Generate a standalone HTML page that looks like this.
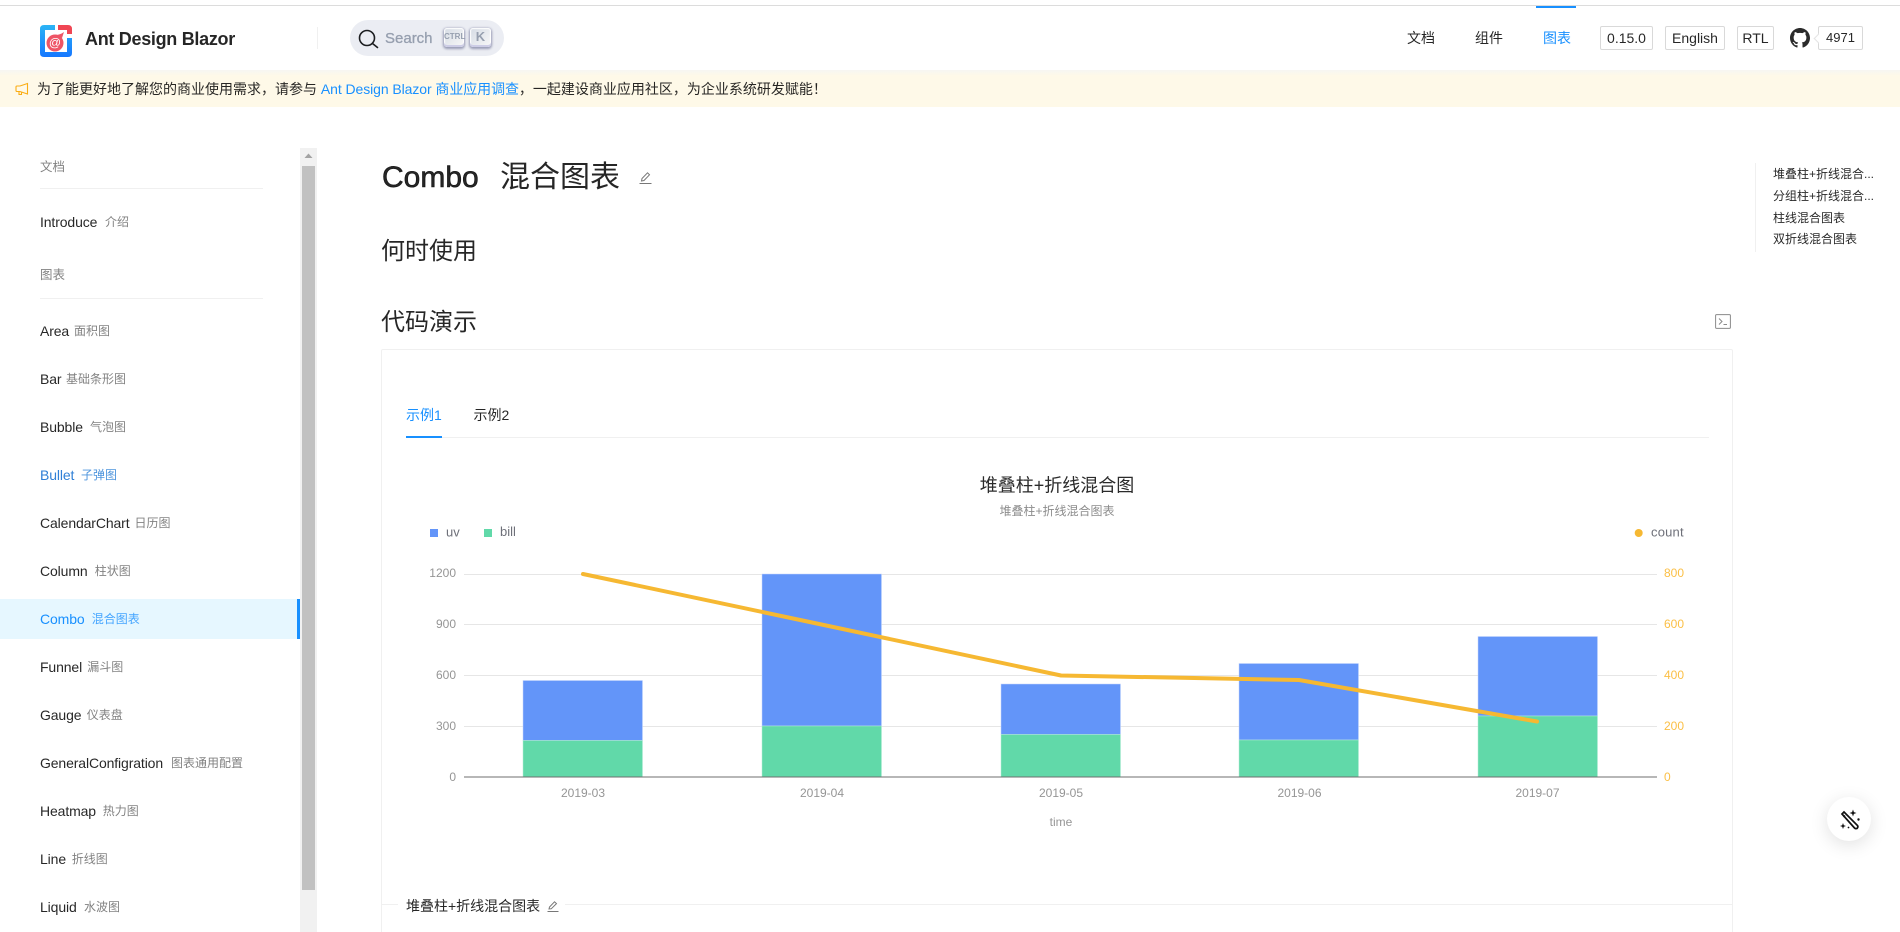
<!DOCTYPE html>
<html lang="zh"><head><meta charset="utf-8"><title>Combo 混合图表</title>
<style>
html,body{margin:0;padding:0;width:1900px;height:932px;overflow:hidden;background:#fff}
body{position:relative;font-family:"Liberation Sans","Noto Sans CJK SC",sans-serif;font-size:14px;color:rgba(0,0,0,.85)}
.a{position:absolute;white-space:nowrap}
.nav{line-height:20px;height:20px;letter-spacing:-.12px}
.sub{font-size:12px;color:rgba(0,0,0,.5);letter-spacing:0}
.btn{position:absolute;top:26px;height:22px;border:1px solid #d9d9d9;border-radius:2px;line-height:22px;text-align:center;font-size:14px;color:rgba(0,0,0,.85)}
.key{position:absolute;top:28px;height:19px;border-radius:3px;background:linear-gradient(-225deg,#d5dbe4,#f8f8f8);box-shadow:inset 0 -2px 0 0 #cdcde6,inset 0 0 1px 1px #fff,0 1px 2px 1px rgba(30,35,90,.4);color:#969faf;text-align:center}
h1,h2{margin:0;font-weight:400}
.anc{position:absolute;left:1773px;font-size:12px;line-height:20px;white-space:nowrap}
</style></head><body>
<div class="a" style="left:0;top:5px;width:1900px;height:1px;background:#dcdcdc"></div>
<div class="a" style="left:1536px;top:6px;width:40px;height:2px;background:#1890ff"></div>

<svg class="a" style="left:40px;top:25px" width="32" height="32" viewBox="0 0 32 32" font-family="'Liberation Sans',sans-serif">
<defs><linearGradient id="g" x1="0" y1="0" x2="0" y2="1"><stop offset="0" stop-color="#2bb4f5"/><stop offset="1" stop-color="#1677ff"/></linearGradient></defs>
<path d="M15 0H4Q0 0 0 4V28Q0 32 4 32H28Q32 32 32 28V13H27V27H5V5H15Z" fill="url(#g)"/>
<path d="M18 0H28Q32 0 32 4V9H27V5H18Z" fill="#f04654"/>
<circle cx="15" cy="18" r="8.500" fill="#ee5566"/>
<path d="M15 10Q20 10 24 7L22 13Z" fill="#ee5566"/>
<text x="15" y="21.500" text-anchor="middle" font-size="12" fill="#fff">@</text>
</svg>
<div class="a" style="left:85px;top:28px;line-height:22px;font-size:18px;font-weight:700;letter-spacing:-.3px;color:rgba(0,0,0,.85)">Ant Design Blazor</div>
<div class="a" style="left:317px;top:27px;width:1px;height:22px;background:#f0f0f0"></div>

<div class="a" style="left:350px;top:20px;width:154px;height:36px;border-radius:18px;background:#ebedf3"></div>
<svg class="a" style="left:357px;top:28px" width="22" height="22" viewBox="0 0 22 22"><circle cx="10" cy="10" r="7.500" fill="none" stroke="#1c1e21" stroke-width="1.600"/><path d="M15.500 15.500L20.500 19.500" stroke="#1c1e21" stroke-width="1.600" stroke-linecap="round"/></svg>
<div class="a" style="left:385px;top:29px;line-height:20px;font-size:15px;color:#969faf;-webkit-text-stroke:.3px #969faf">Search</div>
<div class="key" style="left:444px;width:20px;font-size:8px;line-height:17px;font-weight:700">CTRL</div>
<div class="key" style="left:470px;width:21px;font-size:13px;line-height:17px;font-weight:700">K</div>

<div class="a" style="left:1407px;top:28px;line-height:20px">文档</div>
<div class="a" style="left:1475px;top:28px;line-height:20px">组件</div>
<div class="a" style="left:1543px;top:28px;line-height:20px;color:#1890ff">图表</div>
<div class="btn" style="left:1600px;width:51px">0.15.0</div>
<div class="btn" style="left:1665px;width:58px">English</div>
<div class="btn" style="left:1737px;width:35px">RTL</div>
<svg class="a" style="left:1790px;top:28px" width="20" height="20" viewBox="0 0 16 16"><path fill="#2b2b2b" d="M8 0C3.580 0 0 3.580 0 8c0 3.540 2.290 6.530 5.470 7.590.4.070.55-.17.55-.38 0-.19-.01-.82-.01-1.490-2.010.37-2.530-.49-2.690-.94-.09-.23-.48-.94-.82-1.130-.28-.15-.68-.52-.01-.53.63-.01 1.080.58 1.230.82.72 1.210 1.870.87 2.330.66.07-.52.28-.87.51-1.070-1.780-.2-3.640-.89-3.640-3.950 0-.87.31-1.590.82-2.150-.08-.2-.36-1.020.08-2.120 0 0 .67-.21 2.200.82.64-.18 1.320-.27 2-.27.68 0 1.360.09 2 .27 1.530-1.040 2.200-.82 2.200-.82.44 1.100.16 1.920.08 2.120.51.56.82 1.270.82 2.150 0 3.070-1.870 3.750-3.650 3.950.29.25.54.73.54 1.480 0 1.070-.01 1.930-.01 2.200 0 .21.15.46.55.38A8.013 8.013 0 0016 8c0-4.420-3.580-8-8-8z"/></svg>
<div class="btn" style="left:1818px;width:43px;font-size:13px">4971</div>
<div class="a" style="left:1814.500px;top:35px;width:6px;height:6px;background:#fff;border-left:1px solid #e4e4e4;border-bottom:1px solid #e4e4e4;transform:rotate(45deg)"></div>

<div class="a" style="left:0;top:70px;width:1900px;height:37px;background:linear-gradient(#f6f6f2 0,#fef9e8 6px)"></div>
<svg class="a" style="left:15px;top:82px" width="14" height="14" viewBox="0 0 14 14"><path d="M12.500 1.500V12L5 9.500H2Q1 9.500 1 8.500V5Q1 4 2 4H5Z M4 9.500V12.500H6.500V10.200" fill="none" stroke="#faad14" stroke-width="1.100"/></svg>
<div class="a" style="left:37px;top:79px;line-height:20px">为了能更好地了解您的商业使用需求，请参与 <span style="color:#1890ff;letter-spacing:-.08px">Ant Design Blazor 商业应用调查</span>，一起建设商业应用社区，为企业系统研发赋能！</div>

<div class="a" style="left:300px;top:148px;width:17px;height:784px;background:#f1f1f1"></div>
<div class="a" style="left:302px;top:166px;width:13px;height:724px;background:#c1c1c1"></div>
<svg class="a" style="left:304px;top:153px" width="9" height="6"><path d="M4.500 0.500L8.500 5H0.500Z" fill="#a3a3a3"/></svg>

<div class="a" style="left:0;top:599px;width:300px;height:40px;background:#e6f7ff"></div>
<div class="a" style="left:297px;top:599px;width:3px;height:40px;background:#1890ff"></div>

<div class="a sub nav" style="left:40px;top:157px;font-size:12.500px">文档</div>
<div class="a" style="left:40px;top:188px;width:223px;height:1px;background:#f0f0f0"></div>
<div class="a nav" style="left:40px;top:212px">Introduce</div><div class="a sub nav" style="left:105px;top:212px">介绍</div>
<div class="a sub nav" style="left:40px;top:265px;font-size:12.500px">图表</div>
<div class="a" style="left:40px;top:298px;width:223px;height:1px;background:#f0f0f0"></div>

<div class="a nav" style="left:40px;top:321px">Area</div><div class="a sub nav" style="left:74px;top:321px">面积图</div>
<div class="a nav" style="left:40px;top:369px">Bar</div><div class="a sub nav" style="left:66px;top:369px">基础条形图</div>
<div class="a nav" style="left:40px;top:417px">Bubble</div><div class="a sub nav" style="left:90px;top:417px">气泡图</div>
<div class="a nav" style="left:40px;top:465px;color:#2f7fd6">Bullet</div><div class="a sub nav" style="left:81px;top:465px;color:#4d94dd">子弹图</div>
<div class="a nav" style="left:40px;top:513px">CalendarChart</div><div class="a sub nav" style="left:134.500px;top:513px">日历图</div>
<div class="a nav" style="left:40px;top:561px">Column</div><div class="a sub nav" style="left:94.700px;top:561px">柱状图</div>
<div class="a nav" style="left:40px;top:609px;color:#1890ff">Combo</div><div class="a sub nav" style="left:91.700px;top:609px;color:#45a5ff">混合图表</div>
<div class="a nav" style="left:40px;top:657px">Funnel</div><div class="a sub nav" style="left:87.300px;top:657px">漏斗图</div>
<div class="a nav" style="left:40px;top:705px">Gauge</div><div class="a sub nav" style="left:86.700px;top:705px">仪表盘</div>
<div class="a nav" style="left:40px;top:753px">GeneralConfigration</div><div class="a sub nav" style="left:171px;top:753px">图表通用配置</div>
<div class="a nav" style="left:40px;top:801px">Heatmap</div><div class="a sub nav" style="left:102.700px;top:801px">热力图</div>
<div class="a nav" style="left:40px;top:849px">Line</div><div class="a sub nav" style="left:71.700px;top:849px">折线图</div>
<div class="a nav" style="left:40px;top:897px">Liquid</div><div class="a sub nav" style="left:84px;top:897px">水波图</div>

<h1 class="a" style="left:382px;top:156px;font-size:30px;line-height:44px;font-weight:400;-webkit-text-stroke:.6px rgba(0,0,0,.85)">Combo</h1>
<h1 class="a" style="left:500px;top:156px;font-size:30px;line-height:44px">混合图表</h1>
<svg class="a" style="left:639px;top:171px" width="13" height="14" viewBox="0 0 13 14" fill="none" stroke="#777" stroke-width="1"><path d="M2.500 10L3 7.500L8.500 1.800L10.500 3.800L5 9.500Z"/><path d="M0.500 12.500H12.500"/></svg>
<h2 class="a" style="left:381px;top:235px;font-size:24px;line-height:34px">何时使用</h2>
<h2 class="a" style="left:381px;top:306px;font-size:24px;line-height:34px">代码演示</h2>
<svg class="a" style="left:1715px;top:314px" width="16" height="15" viewBox="0 0 16 15" fill="none" stroke="#8a8a8a" stroke-width="1"><rect x=".6" y=".6" width="14.800" height="13.800" rx="1"/><path d="M4 4.500L7 7.500L4 10.500M8.500 10.500H12"/></svg>

<div class="a" style="left:1755px;top:163px;width:1px;height:89px;background:#f0f0f0"></div>
<div class="anc" style="top:164px">堆叠柱+折线混合...</div>
<div class="anc" style="top:186px">分组柱+折线混合...</div>
<div class="anc" style="top:208px">柱线混合图表</div>
<div class="anc" style="top:229px">双折线混合图表</div>

<div class="a" style="left:381px;top:349px;width:1350px;height:600px;border:1px solid #f0f0f0;border-radius:2px"></div>
<div class="a" style="left:406px;top:405px;line-height:20px;color:#1890ff">示例1</div>
<div class="a" style="left:473.500px;top:405px;line-height:20px">示例2</div>
<div class="a" style="left:406px;top:437px;width:1303px;height:1px;background:#f0f0f0"></div>
<div class="a" style="left:406px;top:436px;width:36px;height:2px;background:#1890ff"></div>

<svg class="a" style="left:0;top:0" width="1900" height="932" font-family="'Liberation Sans','Noto Sans CJK SC',sans-serif">
<g stroke="#e6e6e6" stroke-width="1"><path d="M464 574.500H1657M464 624.500H1657M464 675.500H1657M464 726.500H1657"/></g>
<g fill="#6395f9" stroke="#c5d6fb" stroke-width="0.500">
<rect x="523" y="680.500" width="119.500" height="60"/><rect x="762" y="574" width="119.500" height="152"/><rect x="1001" y="684" width="119.500" height="50.500"/><rect x="1239" y="663.500" width="119.500" height="76.500"/><rect x="1478" y="636.500" width="119.500" height="79.500"/></g>
<g fill="#61d9a9" stroke="#b5ecd6" stroke-width="0.500">
<rect x="523" y="740.500" width="119.500" height="36.500"/><rect x="762" y="726" width="119.500" height="51"/><rect x="1001" y="734.500" width="119.500" height="42.500"/><rect x="1239" y="740" width="119.500" height="37"/><rect x="1478" y="716" width="119.500" height="61"/></g>
<path d="M464 777H1657" stroke="#6f6f6f" stroke-width="1"/>
<polyline points="583,574 821.500,624.500 1061,675.500 1299,680 1537,721.500" fill="none" stroke="#f6b832" stroke-width="4" stroke-linecap="round" stroke-linejoin="round"/>
<text x="1057" y="491.500" text-anchor="middle" font-size="18" fill="#2b2b2b">堆叠柱+折线混合图</text>
<text x="1057" y="515" text-anchor="middle" font-size="12" fill="#8c8c8c">堆叠柱+折线混合图表</text>
<rect x="430" y="529" width="8" height="8" fill="#6395f9"/><text x="446" y="536.500" font-size="13" fill="#6e7079">uv</text>
<rect x="484" y="529" width="8" height="8" fill="#61d9a9"/><text x="500" y="536" font-size="13" fill="#6e7079">bill</text>
<circle cx="1638.700" cy="533" r="4" fill="#f6b832"/><text x="1651" y="536.500" font-size="13" letter-spacing=".2" fill="#6e7079">count</text>
<g font-size="12" fill="#959595" text-anchor="end"><text x="456" y="577">1200</text><text x="456" y="628">900</text><text x="456" y="679">600</text><text x="456" y="730">300</text><text x="456" y="781">0</text></g>
<g font-size="12" fill="#fbbf45"><text x="1664" y="577">800</text><text x="1664" y="628">600</text><text x="1664" y="679">400</text><text x="1664" y="730">200</text><text x="1664" y="781">0</text></g>
<g font-size="12" fill="#959595" text-anchor="middle"><text x="583" y="797">2019-03</text><text x="822" y="797">2019-04</text><text x="1061" y="797">2019-05</text><text x="1299.500" y="797">2019-06</text><text x="1537.500" y="797">2019-07</text><text x="1061" y="826">time</text></g>
</svg>

<div class="a" style="left:382px;top:904px;width:16px;height:1px;background:#f0f0f0"></div>
<div class="a" style="left:565px;top:904px;width:1167px;height:1px;background:#f0f0f0"></div>
<div class="a" style="left:406px;top:896px;line-height:20px">堆叠柱+折线混合图表</div>
<svg class="a" style="left:547px;top:900px" width="12" height="13" viewBox="0 0 12 13" fill="none" stroke="#777" stroke-width="1"><path d="M2 9L2.500 7L7.500 1.800L9.500 3.600L4.200 8.800Z"/><path d="M0.500 11.500H11.500"/></svg>

<div class="a" style="left:1827px;top:797px;width:44px;height:44px;border-radius:50%;background:#fff;box-shadow:0 4px 18px rgba(0,0,0,.12)"></div>
<svg class="a" style="left:1839px;top:809px" width="22" height="22" viewBox="0 0 22 22"><path d="M3 5L5 3L18.500 16.500Q19.500 18 18 19.500Q16.500 20 15.500 19Z" fill="none" stroke="#111" stroke-width="1.700"/><path d="M6 6.500L4.500 8" stroke="#111" stroke-width="1.500"/><path d="M14 0.500L14.900 3.100L17.500 4L14.900 4.900L14 7.500L13.100 4.900L10.500 4L13.100 3.100Z M4 14L4.800 16.200L7 17L4.800 17.800L4 20L3.200 17.800L1 17L3.200 16.200Z" fill="#111"/><circle cx="19.500" cy="10.500" r="1.200" fill="#111"/><circle cx="9.500" cy="18.500" r="0.900" fill="#111"/></svg>
</body></html>
